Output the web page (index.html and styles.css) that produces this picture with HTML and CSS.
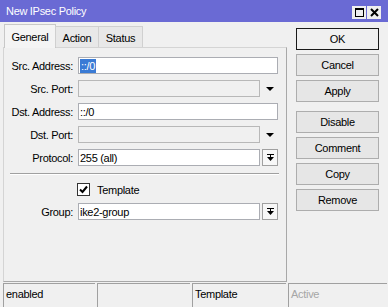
FILE: index.html
```html
<!DOCTYPE html>
<html>
<head>
<meta charset="utf-8">
<link rel="stylesheet" href="styles.css">
</head>
<body>
<div class="window">
  <div class="titlebar">
    <span class="title">New IPsec Policy</span>
    <div class="tbtns">
      <span class="tbtn"><svg width="11" height="11" viewBox="0 0 11 11"><rect x="1.5" y="1.5" width="8" height="8" fill="none" stroke="#000" stroke-width="1"/><rect x="1" y="1" width="9" height="2" fill="#000"/></svg></span>
      <span class="tbtn"><svg width="11" height="11" viewBox="0 0 11 11"><path d="M2 2 L9 9 M9 2 L2 9" stroke="#000" stroke-width="2"/></svg></span>
    </div>
  </div>
  <div class="main">
    <div class="left">
      <div class="tabs">
        <div class="tab tab-general active">General</div>
        <div class="tab tab-action">Action</div>
        <div class="tab tab-status">Status</div>
      </div>
      <div class="panel">
        <div class="row">
          <label class="lbl">Src. Address:</label>
          <div class="input full"><span class="sel">::/0</span></div>
        </div>
        <div class="row">
          <label class="lbl">Src. Port:</label>
          <div class="input short disabled"></div>
          <span class="arrow"><svg width="8" height="4" viewBox="0 0 8 4"><polygon points="0,0 8,0 4,4" fill="#000"/></svg></span>
        </div>
        <div class="row">
          <label class="lbl">Dst. Address:</label>
          <div class="input full">::/0</div>
        </div>
        <div class="row">
          <label class="lbl">Dst. Port:</label>
          <div class="input short disabled"></div>
          <span class="arrow"><svg width="8" height="4" viewBox="0 0 8 4"><polygon points="0,0 8,0 4,4" fill="#000"/></svg></span>
        </div>
        <div class="row">
          <label class="lbl">Protocol:</label>
          <div class="input short">255 (all)</div>
          <span class="dbtn"><svg width="7" height="8" viewBox="0 0 7 8"><rect x="0" y="0" width="7" height="1" fill="#000"/><rect x="3" y="1" width="1" height="3" fill="#000"/><polygon points="0,3 7,3 3.5,7" fill="#000"/></svg></span>
        </div>
        <div class="sep"></div>
        <div class="row check-row">
          <span class="checkbox"><svg width="9" height="9" viewBox="0 0 9 9"><path d="M1 4.5 L3.5 7 L8 1.5" fill="none" stroke="#000" stroke-width="2"/></svg></span>
          <span class="check-label">Template</span>
        </div>
        <div class="row group-row">
          <label class="lbl">Group:</label>
          <div class="input short">ike2-group</div>
          <span class="dbtn"><svg width="7" height="8" viewBox="0 0 7 8"><rect x="0" y="0" width="7" height="1" fill="#000"/><rect x="3" y="1" width="1" height="3" fill="#000"/><polygon points="0,3 7,3 3.5,7" fill="#000"/></svg></span>
        </div>
      </div>
    </div>
    <div class="buttons">
      <div class="btn default">OK</div>
      <div class="btn">Cancel</div>
      <div class="btn">Apply</div>
      <div class="btn gap">Disable</div>
      <div class="btn">Comment</div>
      <div class="btn">Copy</div>
      <div class="btn">Remove</div>
    </div>
  </div>
  <div class="status">
    <div class="sbox s1">enabled</div>
    <div class="sbox s2"></div>
    <div class="sbox s3">Template</div>
    <div class="sbox s4 dim">Active</div>
  </div>
</div>
</body>
</html>
```
FILE: styles.css
```css
html, body {
  margin: 0;
  padding: 0;
}
body {
  width: 388px;
  height: 307px;
  overflow: hidden;
  background: #f0f0f0;
  font-family: "Liberation Sans", Arial, sans-serif;
  font-size: 11px;
  letter-spacing: -0.3px;
  color: #000;
}
.window {
  display: flex;
  flex-direction: column;
  height: 307px;
}
.titlebar {
  height: 22px;
  flex: none;
  background: #6a6ad4;
  display: flex;
  align-items: center;
  padding: 0 7px 0 6px;
  color: #fff;
}
.title {
  flex: 1;
}
.tbtns {
  display: flex;
  gap: 1px;
  margin-top: 3px;
}
.tbtn {
  width: 14px;
  height: 13px;
  background: #efefef;
  display: flex;
  align-items: center;
  justify-content: center;
}
.main {
  flex: 1;
  display: flex;
}
.left {
  margin-left: 3px;
  width: 284px;
  display: flex;
  flex-direction: column;
}
.tabs {
  display: flex;
  align-items: flex-end;
  height: 23px;
  margin-top: 2px;
  padding-left: 1px;
  position: relative;
  z-index: 1;
}
.tab {
  box-sizing: border-box;
  height: 21px;
  border: 1px solid #d0d0d0;
  border-bottom: none;
  background: #e8e8e8;
  display: flex;
  align-items: center;
  justify-content: center;
  padding-top: 1px;
}
.tab.active {
  height: 24px;
  margin-bottom: -1px;
  background: #f4f4f4;
  border-color: #c8c8c8;
}
.tab-general { width: 52px; }
.tab-action { width: 44px; margin-left: -1px; }
.tab-status { width: 45px; margin-left: -1px; }
.panel {
  box-sizing: border-box;
  height: 235px;
  border: 1px solid;
  border-color: #d4d4d4 #a8a8a8 #a8a8a8 #d4d4d4;
  padding-top: 9px;
  display: flex;
  flex-direction: column;
  gap: 6px;
}
.row {
  display: flex;
  align-items: center;
  height: 17px;
}
.lbl {
  width: 69px;
  text-align: right;
  margin-right: 5px;
  flex: none;
}
.input {
  box-sizing: border-box;
  height: 17px;
  border: 1px solid #abadb3;
  background: #fff;
  display: flex;
  align-items: center;
  padding-left: 1px;
  flex: none;
}
.input.full { width: 200px; }
.input.short { width: 182px; }
.input.disabled { background: #f0f0f0; border-color: #b8b8b8; }
.sel {
  background: #3a7bd5;
  color: #fff;
  line-height: 14px;
  padding: 0 1px;
}
.arrow, .dbtn {
  box-sizing: border-box;
  width: 16px;
  height: 17px;
  margin-left: 2px;
  display: flex;
  align-items: center;
  justify-content: center;
  flex: none;
}
.dbtn {
  border: 1px solid #a0a0a0;
  background: #f7f7f7;
}
.sep {
  margin: 1px 7px 0 6px;
  height: 0;
  border-top: 1px solid #a0a0a0;
  border-bottom: 1px solid #fff;
}
.check-row {
  height: 13px;
  margin-top: 2px;
}
.checkbox {
  box-sizing: border-box;
  width: 13px;
  height: 13px;
  margin-left: 73px;
  border: 1px solid #333;
  background: #fff;
  display: flex;
  align-items: center;
  justify-content: center;
}
.check-label {
  margin-left: 7px;
}
.group-row {
  margin-top: 1px;
}
.buttons {
  margin-left: 9px;
  width: 83px;
  padding-top: 6px;
  display: flex;
  flex-direction: column;
  gap: 4px;
}
.btn {
  box-sizing: border-box;
  height: 22px;
  border: 1px solid #adadad;
  background: #e6e6e6;
  display: flex;
  align-items: center;
  justify-content: center;
}
.btn.default {
  border-color: #1a1a1a;
  background: #f0f0f0;
}
.btn.gap {
  margin-top: 5px;
}
.status {
  height: 24px;
  flex: none;
  display: flex;
  gap: 2px;
  padding-left: 3px;
}
.sbox {
  box-sizing: border-box;
  border-top: 1px solid #a0a0a0;
  border-left: 1px solid #a0a0a0;
  padding-left: 2px;
  padding-bottom: 3px;
  display: flex;
  align-items: center;
}
.s1 { width: 92px; }
.s2 { width: 93px; }
.s3 { width: 94px; }
.s4 { width: 99px; }
.dim { color: #a6a6a6; }
```
